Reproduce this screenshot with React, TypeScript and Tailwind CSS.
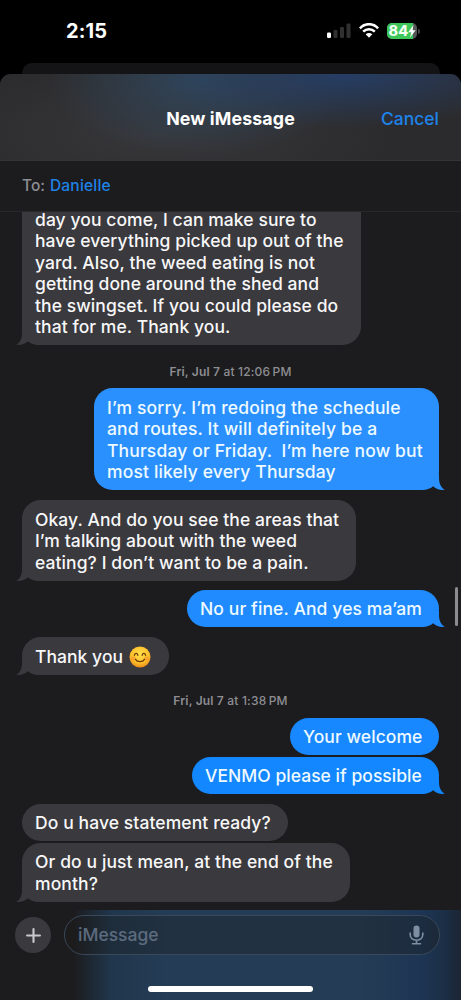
import type { ReactNode } from 'react';
import clsx from 'clsx';

interface Message {
  lines: ReactNode[];
  mine?: boolean;
  tail?: boolean;
  // size and spacing of the bubble in the thread
  className: string;
}

function Smile() {
  return (
    <svg width="22" height="22" viewBox="0 0 22 22" className="ml-px inline-block align-[-5px]">
      <defs>
        <radialGradient id="face" cx="50%" cy="36%" r="65%">
          <stop offset="0" stopColor="#ffe04a" />
          <stop offset="0.65" stopColor="#fdc02b" />
          <stop offset="1" stopColor="#e98a16" />
        </radialGradient>
      </defs>
      <circle cx="11" cy="11" r="10.5" fill="url(#face)" />
      <ellipse cx="4.4" cy="12.6" rx="2.6" ry="2" fill="#f58a2c" opacity="0.55" />
      <ellipse cx="17.6" cy="12.6" rx="2.6" ry="2" fill="#f58a2c" opacity="0.55" />
      <path d="M5.4 9.4c.5-2.6 3-2.6 3.5 0M13.1 9.4c.5-2.6 3-2.6 3.5 0" fill="none" stroke="#6b3a0a" strokeWidth="1.2" strokeLinecap="round" />
      <path d="M6.5 13.4c1.6 3 7.4 3 9 0" fill="none" stroke="#6b3a0a" strokeWidth="1.2" strokeLinecap="round" />
    </svg>
  );
}

const firstDay: Message[] = [
  {
    lines: ['day you come, I can make sure to', 'have everything picked up out of the', 'yard. Also, the weed eating is not', 'getting done around the shed and', 'the swingset. If you could please do', 'that for me. Thank you.'],
    tail: true,
    className: '-mt-[12px] w-[339px] rounded-t-none bg-[#3a393e] tracking-[0.07px]',
  },
];

const noon: Message[] = [
  {
    lines: ['I’m sorry. I’m redoing the schedule', 'and routes. It will definitely be a', 'Thursday or Friday.  I’m here now but', 'most likely every Thursday'],
    mine: true,
    tail: true,
    className: 'w-[345px] bg-[#2a90fe] text-[#2a90fe] tracking-[0.15px]',
  },
  {
    lines: ['Okay. And do you see the areas that', 'I’m talking about with the weed', 'eating? I don’t want to be a pain.'],
    tail: true,
    className: 'mt-[10px] w-[334px] bg-[#3a393e] tracking-[0.08px]',
  },
  {
    lines: ['No ur fine. And yes ma’am'],
    mine: true,
    tail: true,
    className: 'mt-[9px] w-[252px] bg-[#1f8bff] text-[#1f8bff] tracking-[0.11px]',
  },
  {
    lines: [<>Thank you <Smile /></>],
    tail: true,
    className: 'mt-[10px] w-[147px] bg-[#3a393e] tracking-[0.04px]',
  },
];

const afternoon: Message[] = [
  { lines: ['Your welcome'], mine: true, className: 'w-[149px] bg-[#1788ff] tracking-[0.07px]' },
  {
    lines: ['VENMO please if possible'],
    mine: true,
    tail: true,
    className: 'mt-[1.5px] w-[247px] bg-[#1387ff] text-[#1387ff] tracking-[0.03px]',
  },
  { lines: ['Do u have statement ready?'], className: 'mt-[9.5px] w-[266px] bg-[#3a393e] tracking-[0.09px]' },
  {
    lines: ['Or do u just mean, at the end of the', 'month?'],
    tail: true,
    className: 'mt-[1.5px] w-[328px] bg-[#3a393e] tracking-[0.1px]',
  },
];

function Bubble({ lines, mine, tail, className }: Message) {
  return (
    <div className={clsx('relative shrink-0 rounded-[18.5px] px-[13px] pt-[8.5px] pb-[7.5px]', mine ? 'self-end' : 'self-start', className)}>
      {lines.map((line, i) => (
        <p key={i} className={clsx('relative z-10 h-[21.5px] whitespace-pre text-[17.5px] leading-[21.5px] font-medium', mine ? 'text-[#eefaff]' : 'text-[#f7f7f8]')}>
          {line}
        </p>
      ))}
      {tail && (
        <svg
          width="28"
          height="20"
          viewBox="0 0 28 20"
          className={clsx('absolute bottom-0', mine ? '-right-[6px]' : '-left-[6px] -scale-x-100 text-[#3a393e]')}
        >
          <path d="M4 20V4h18v4.500c0 5 2 9.500 6 11.300-5 .6-9-.8-12-3.600-3 2.600-6 3.800-12 3.800z" fill="currentColor" />
        </svg>
      )}
    </div>
  );
}

function Stamp({ day, time, className }: { day: string; time: string; className: string }) {
  return (
    <p className={clsx('flex h-4 shrink-0 items-center justify-center text-[12px] tracking-[0.18px] whitespace-pre text-[#8e8e93]', className)}>
      <span className="font-semibold">{day}</span>
      <span className="font-medium">{time}</span>
    </p>
  );
}

function StatusBar() {
  return (
    <div className="flex h-[63px] items-start bg-black pt-[21px] pr-[41.5px] pl-[66px]">
      <span className="text-[20px] leading-[21px] font-bold tracking-[0.1px] text-white">2:15</span>
      <div className="mt-[2px] ml-auto flex items-start">
        <svg width="24" height="16" viewBox="0 0 24 16">
          <rect x="0" y="9.5" width="4" height="5.5" rx="1.2" fill="#fff" />
          <rect x="6.5" y="7" width="4" height="8" rx="1.2" fill="#303030" />
          <rect x="13" y="4" width="4" height="11" rx="1.2" fill="#303030" />
          <rect x="19.5" y="0.5" width="4" height="14.5" rx="1.2" fill="#303030" />
        </svg>
        <svg width="20" height="15" viewBox="0 0 20 15" className="ml-[8px]">
          <g fill="none" stroke="#fff" strokeWidth="2.5">
            <path d="M.9 5.3C6-.2 14-.2 19.1 5.3" />
            <path d="M4.2 8.7c3.2-3.3 8.4-3.3 11.6 0" />
          </g>
          <path d="M6.7 11.2c1.9-1.700 4.700-1.700 6.600 0L10 14.700z" fill="#fff" />
        </svg>
        <div className="relative ml-[8px] h-[16px] w-[30px] overflow-hidden rounded-[5px] bg-[#555658]">
          <div className="h-full w-[26px] bg-[#3dc65a]" />
          <span className="absolute top-0 left-[1.5px] text-[14.5px] leading-[16px] font-extrabold text-[#f0fff2]">84</span>
          <svg width="8" height="13" viewBox="0 0 8 13" className="absolute top-[2px] right-[1px]">
            <path d="M5.5 0L.3 7.200h3L2 12.500l5.600-7.300H4.500z" fill="#fff" />
          </svg>
        </div>
        <div className="mt-[6px] ml-[1px] h-[5px] w-[1.5px] rounded-r bg-[#444]" />
      </div>
    </div>
  );
}

function Composer() {
  return (
    <div className="h-[90px] bg-[linear-gradient(90deg,#1c1c1e_0%,#1c1c1e_16%,#20364c_24%,#243c55_36%,#243c55_78%,#1d3553_92%,#1b2d43_97%,#1c2533_100%)]">
      <div className="flex items-center pt-[5px] pl-[15px]">
        <div className="flex size-[36px] items-center justify-center rounded-full bg-[#3a393e]">
          <svg width="15" height="15" viewBox="0 0 14 14" stroke="#c8c8cb" strokeWidth="2" strokeLinecap="round">
            <path d="M7 1v12M1 7h12" />
          </svg>
        </div>
        <div className="ml-[13px] flex h-[40px] w-[376px] items-center rounded-full border border-[#39485a] bg-[#1c1c1e]/35 pr-[15px] pl-[13px]">
          <span className="text-[17.5px] font-medium text-[#5c6b7e]">iMessage</span>
          <svg width="15" height="20" viewBox="0 0 15 20" className="ml-auto" fill="none" stroke="#7f8ea1" strokeWidth="1.6" strokeLinecap="round">
            <rect x="4.5" y="0.5" width="6" height="12" rx="3" fill="#7f8ea1" stroke="none" />
            <path d="M1.2 8v1.600c0 3.200 2.600 5.600 6.300 5.600s6.300-2.400 6.300-5.600V8M7.500 15.500v3M3.500 18.800h8" />
          </svg>
        </div>
      </div>
      <div className="mx-auto mt-[31px] h-[5.5px] w-[165px] rounded-full bg-white" />
    </div>
  );
}

export default function App() {
  return (
    <div className="flex h-[1000px] w-[461px] flex-col overflow-hidden bg-black font-['Inter','Liberation_Sans',sans-serif]">
      <StatusBar />

      {/* edge of the screen behind the sheet */}
      <div className="mx-[21.5px] h-[11px] shrink-0 rounded-t-[10px] bg-[#141416]" />

      <div className="flex min-h-0 flex-1 flex-col overflow-hidden rounded-t-[11px] bg-[#1c1c1e]">
        <header className="grid h-[87px] shrink-0 grid-cols-3 items-center border-b border-[#343437] bg-[#2b2b2d] bg-[radial-gradient(ellipse_190px_54px_at_345px_0px,#263e65_0%,transparent_100%),radial-gradient(ellipse_150px_75px_at_200px_6px,#30455a_0%,transparent_100%),radial-gradient(ellipse_240px_80px_at_160px_60px,#37373a_0%,transparent_100%)] px-[22px] pt-[4px]">
          <h1 className="col-start-2 text-center text-[17.8px] font-bold tracking-[0.12px] whitespace-nowrap text-white">New iMessage</h1>
          <button className="text-right text-[17.5px] font-medium text-[#1e83e9]">Cancel</button>
        </header>

        <div className="flex h-[51px] shrink-0 items-center gap-[5px] border-b border-[#29292b] pl-[22px] text-[15.5px] font-medium">
          <span className="text-[#8e8e93]">To:</span>
          <span className="tracking-[0.2px] text-[#1e83e9]">Danielle</span>
        </div>

        <div className="relative flex min-h-0 flex-1 flex-col overflow-hidden px-[22px]">
          {firstDay.map((m, i) => <Bubble key={i} {...m} />)}
          <Stamp day="Fri, Jul 7" time={' at 12:06\u2009PM'} className="mt-[18.5px] mb-[8.5px]" />
          {noon.map((m, i) => <Bubble key={i} {...m} />)}
          <Stamp day="Fri, Jul 7" time={' at 1:38\u2009PM'} className="mt-[18.5px] mb-[8.5px]" />
          {afternoon.map((m, i) => <Bubble key={i} {...m} />)}
          <div className="absolute top-[375px] right-[3px] h-[39px] w-[3px] rounded-full bg-[#8c8c8e]" />
        </div>

        <Composer />
      </div>
    </div>
  );
}
